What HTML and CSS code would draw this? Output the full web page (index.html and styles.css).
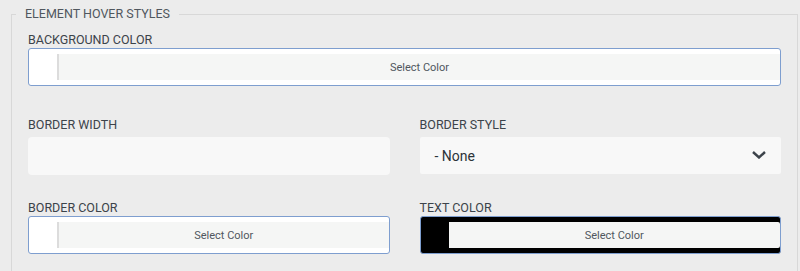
FILE: index.html
```html
<!DOCTYPE html>
<html lang="en">
<head>
  <meta charset="UTF-8">
  <title>Element Hover Styles</title>
  <meta name="viewport" content="width=device-width, initial-scale=1">
  <link rel="stylesheet" href="styles.css">
</head>
<body>
  <fieldset class="hover-styles">
    <legend>Element Hover Styles</legend>
    <div class="fields">
      <div class="field field-wide">
        <label>Background Color</label>
        <div class="color-picker">
          <button class="color-btn">Select Color</button>
        </div>
      </div>

      <div class="grid">
        <div class="field">
          <label>Border Width</label>
          <input class="text-input" type="text">
        </div>
        <div class="field">
          <label>Border Style</label>
          <div class="select">
            <span>- None</span>
            <svg class="chevron" width="14" height="8" viewBox="0 0 14 8"><polyline points="1,1 7,6.5 13,1" fill="none" stroke="#3c434a" stroke-width="2.4"/></svg>
          </div>
        </div>
        <div class="field">
          <label>Border Color</label>
          <div class="color-picker">
            <button class="color-btn">Select Color</button>
          </div>
        </div>
        <div class="field">
          <label>Text Color</label>
          <div class="color-picker" style="background:#000">
            <button class="color-btn no-line">Select Color</button>
          </div>
        </div>
      </div>
    </div>
  </fieldset>
</body>
</html>
```

FILE: styles.css
```css
body { margin: 6px 2px 0 11px; background: #ececec; font-family: Roboto, "Liberation Sans", Arial, sans-serif; color: #3c434a; }
.hover-styles { margin: 0; padding: 0 4px 20px; border: 1px solid #d8d8d8; min-width: 0; }
.hover-styles legend { padding: 0 9px; font-size: 12.5px; line-height: 16px; text-transform: uppercase; color: #50575e; }
.fields { padding: 10px 12px 0; }
label { display: block; font-size: 12.5px; line-height: 16px; text-transform: uppercase; color: #3c434a; }
.field-wide { margin-bottom: 31px; }
.grid { display: grid; grid-template-columns: 1fr 1fr; column-gap: 30px; row-gap: 25px; }
.grid label { margin-bottom: 4px; }
.grid .field:nth-child(n+3) label { margin-bottom: 0; }
.color-picker { display: flex; height: 38px; box-sizing: border-box; padding: 5px 0 5px 28px; background: #fff; border: 1px solid #7e9ecf; border-radius: 3px; }
.color-btn { flex: 1; margin: 0; padding: 0; height: 26px; border: none; border-left: 2px solid #dcdcdc; background: #f5f6f5; font-family: inherit; font-size: 11px; color: #50575e; }
.color-btn.no-line { border-left: none; border-radius: 0 2px 2px 0; }
.text-input { display: block; width: 100%; height: 38px; box-sizing: border-box; margin: 0; border: none; border-radius: 4px; background: #f8f8f8; }
.select { display: flex; align-items: center; justify-content: space-between; height: 37px; box-sizing: border-box; padding: 0 15px 0 15px; background: #f8f8f8; border-radius: 2px; font-size: 14px; color: #2c3338; }
.chevron { display: block; margin-top: -2px; }
```
